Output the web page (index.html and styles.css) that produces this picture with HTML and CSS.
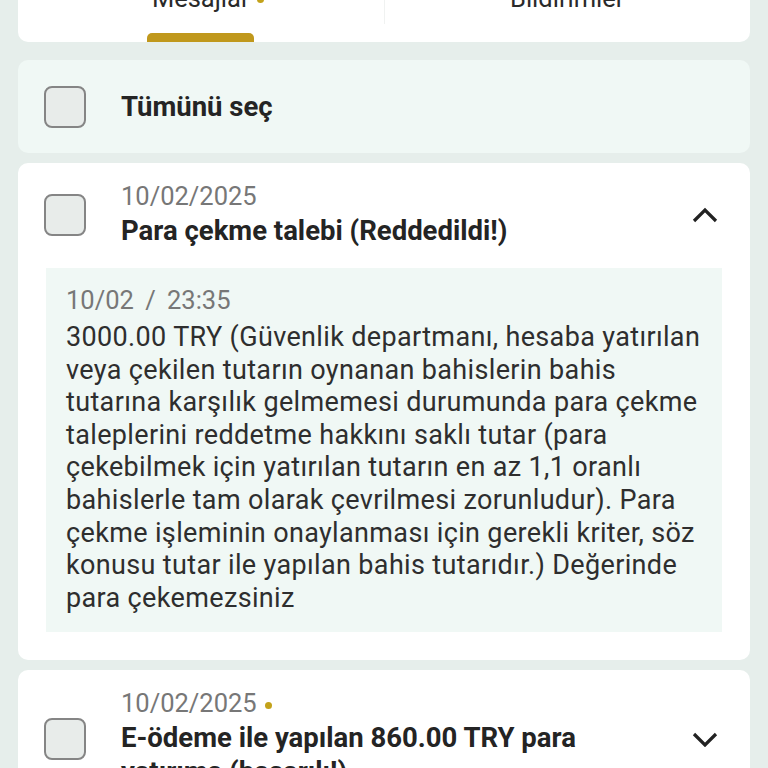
FILE: index.html
```html
<!DOCTYPE html>
<html lang="tr">
<head>
    <meta charset="UTF-8">
    <meta name="viewport" content="width=device-width, initial-scale=1.0">
    <title>Mesajlar</title>
    <link rel="stylesheet" href="styles.css">
</head>
<body>
    <div class="page">
        <div class="tabs">
            <div class="tab active">
                <span class="tab-label">Mesajlar<span class="dot tab-dot"></span></span>
                <span class="tab-bar"></span>
            </div>
            <div class="tab-divider"></div>
            <div class="tab">
                <span class="tab-label">Bildirimler</span>
            </div>
        </div>

        <div class="select-all">
            <span class="checkbox"></span>
            <span class="select-label">Tümünü seç</span>
        </div>

        <div class="message open">
            <div class="message-head">
                <span class="checkbox"></span>
                <div class="message-info">
                    <div class="message-date">10/02/2025</div>
                    <div class="message-title">Para çekme talebi (Reddedildi!)</div>
                </div>
                <svg class="chevron" width="26" height="16" viewBox="0 0 26 16">
                    <path d="M2 14 L13 3 L24 14" fill="none" stroke="#222" stroke-width="3.2"/>
                </svg>
            </div>
            <div class="message-body">
                <div class="body-time">10/02 / 23:35</div>
                <p>3000.00 TRY (Güvenlik departmanı, hesaba yatırılan<br>
                veya çekilen tutarın oynanan bahislerin bahis<br>
                tutarına karşılık gelmemesi durumunda para çekme<br>
                taleplerini reddetme hakkını saklı tutar (para<br>
                çekebilmek için yatırılan tutarın en az 1,1 oranlı<br>
                bahislerle tam olarak çevrilmesi zorunludur). Para<br>
                çekme işleminin onaylanması için gerekli kriter, söz<br>
                konusu tutar ile yapılan bahis tutarıdır.) Değerinde<br>
                para çekemezsiniz</p>
            </div>
        </div>

        <div class="message">
            <div class="message-head">
                <span class="checkbox"></span>
                <div class="message-info">
                    <div class="message-date">10/02/2025 <span class="dot"></span></div>
                    <div class="message-title">E-ödeme ile yapılan 860.00 TRY para yatırıma (başarılı!)</div>
                </div>
                <svg class="chevron" width="26" height="16" viewBox="0 0 26 16">
                    <path d="M2 3 L13 14 L24 3" fill="none" stroke="#222" stroke-width="3.2"/>
                </svg>
            </div>
        </div>
    </div>
</body>
</html>
```

FILE: styles.css
```css
body {
    font-family: Roboto, 'Noto Sans', sans-serif;
    margin: 0;
    padding: 0;
    background: #e6eeeb;
    color: #262626;
}

.page {
    padding: 0 18px;
    display: flex;
    flex-direction: column;
}

/* tabs (scrolled partly out of view) */
.tabs {
    background: white;
    border-radius: 0 0 10px 10px;
    display: flex;
    height: 80px;
    margin-top: -38px;
    margin-bottom: 18px;
}

.tab {
    flex: 1;
    display: flex;
    flex-direction: column;
    align-items: center;
    justify-content: space-between;
    padding-top: 21px;
}

.tab-label {
    position: relative;
    font-size: 25.5px;
    line-height: 30px;
    color: #2a2a2a;
}

.tab-bar {
    width: 107px;
    height: 9px;
    background: #c0981c;
    border-radius: 5px 5px 0 0;
}

.tab-divider {
    width: 1px;
    height: 62px;
    background: #f0f2f1;
}

.dot {
    display: inline-block;
    width: 7px;
    height: 7px;
    border-radius: 50%;
    background: #c3a21a;
    vertical-align: middle;
    margin-left: 2px;
}

.tab-dot {
    position: absolute;
    right: -14px;
    top: 13px;
}

.checkbox {
    width: 38px;
    height: 38px;
    border: 2px solid #858585;
    border-radius: 8px;
    background: #e8ecea;
    flex-shrink: 0;
}

.select-all {
    background: #f0f8f5;
    border-radius: 10px;
    height: 93px;
    display: flex;
    align-items: center;
    padding: 0 26px;
    gap: 35px;
    margin-bottom: 10px;
    box-sizing: border-box;
}

.select-label {
    font-size: 27.5px;
    font-weight: bold;
    color: #242424;
}

.message {
    background: white;
    border-radius: 10px;
    padding: 18px 28px 28px 26px;
    margin-bottom: 10px;
}

.message-head {
    display: flex;
    align-items: center;
    gap: 35px;
}

.message-info {
    flex: 1;
}

.message-date {
    font-size: 25.5px;
    line-height: 30px;
    color: #777;
}

.message-title {
    font-size: 27.5px;
    font-weight: bold;
    line-height: 34px;
    margin-top: 3px;
    color: #242424;
}

.chevron {
    flex-shrink: 0;
    margin-right: 4px;
}

.message-body {
    background: #f0f8f5;
    margin: 20px 0 0 2px;
    padding: 17px 10px 18px 20px;
}

.body-time {
    font-size: 25.5px;
    line-height: 30px;
    word-spacing: 5px;
    color: #777;
}

.message-body p {
    margin: 6px 0 0;
    font-size: 27px;
    line-height: 32.6px;
    letter-spacing: 0.35px;
    white-space: nowrap;
    color: #2e2e2e;
}
```
